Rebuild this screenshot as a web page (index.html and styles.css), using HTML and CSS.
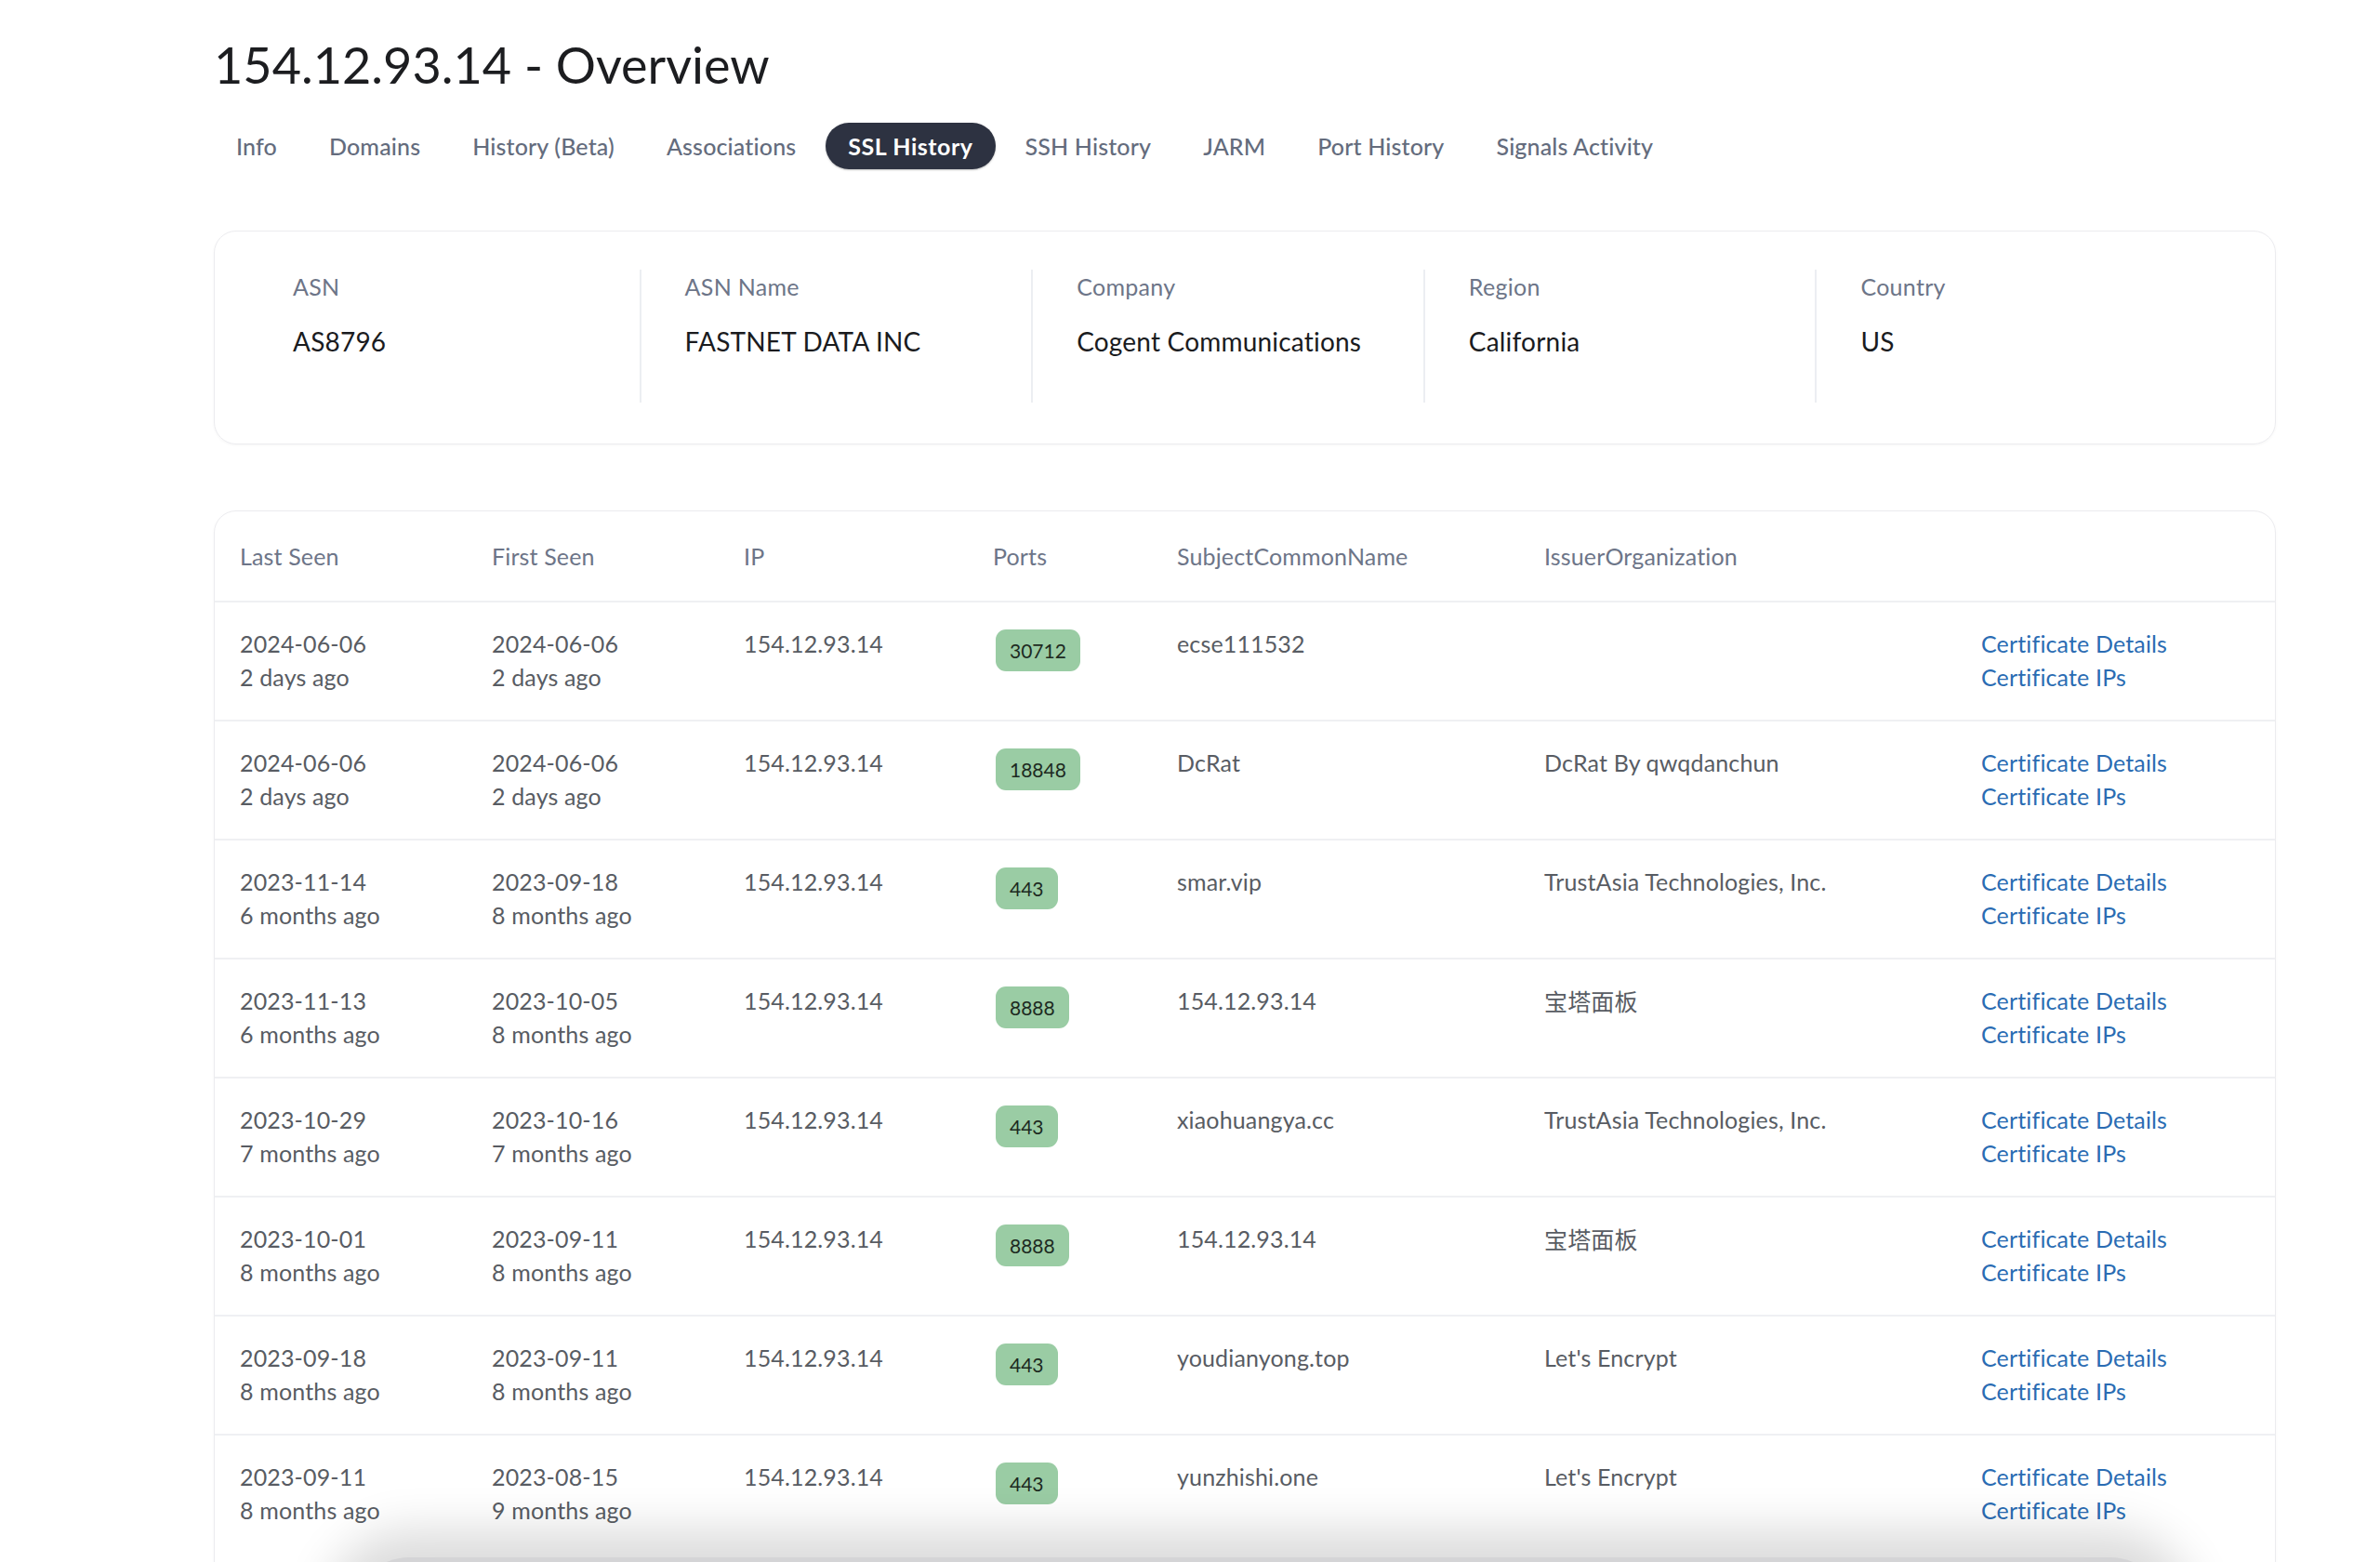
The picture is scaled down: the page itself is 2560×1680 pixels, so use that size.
FILE: index.html
```html
<!DOCTYPE html>
<html lang="en">
<head>
<meta charset="utf-8">
<title>154.12.93.14 - Overview</title>
<link rel="stylesheet" href="styles.css">
</head>
<body>
<main class="page">
  <h1 class="title">154.12.93.14 - Overview</h1>
  <nav class="tabs">
    <a class="tab">Info</a>
    <a class="tab">Domains</a>
    <a class="tab">History (Beta)</a>
    <a class="tab">Associations</a>
    <a class="tab tab-active">SSL History</a>
    <a class="tab">SSH History</a>
    <a class="tab">JARM</a>
    <a class="tab">Port History</a>
    <a class="tab">Signals Activity</a>
  </nav>

  <section class="info-card">
    <div class="info-col">
      <div class="info-label">ASN</div>
      <div class="info-value">AS8796</div>
    </div>
    <div class="info-col">
      <div class="info-label">ASN Name</div>
      <div class="info-value">FASTNET DATA INC</div>
    </div>
    <div class="info-col">
      <div class="info-label">Company</div>
      <div class="info-value">Cogent Communications</div>
    </div>
    <div class="info-col">
      <div class="info-label">Region</div>
      <div class="info-value">California</div>
    </div>
    <div class="info-col">
      <div class="info-label">Country</div>
      <div class="info-value">US</div>
    </div>
  </section>

  <section class="table-card">
    <table class="ssl-table">
      <thead>
        <tr>
          <th class="c-last">Last Seen</th>
          <th class="c-first">First Seen</th>
          <th class="c-ip">IP</th>
          <th class="c-ports">Ports</th>
          <th class="c-subject">SubjectCommonName</th>
          <th class="c-issuer">IssuerOrganization</th>
          <th class="c-links"></th>
        </tr>
      </thead>
      <tbody>
        <tr>
          <td>2024-06-06<br>2 days ago</td>
          <td>2024-06-06<br>2 days ago</td>
          <td>154.12.93.14</td>
          <td><span class="port">30712</span></td>
          <td>ecse111532</td>
          <td></td>
          <td><a class="link">Certificate Details</a><br><a class="link">Certificate IPs</a></td>
        </tr>
        <tr>
          <td>2024-06-06<br>2 days ago</td>
          <td>2024-06-06<br>2 days ago</td>
          <td>154.12.93.14</td>
          <td><span class="port">18848</span></td>
          <td>DcRat</td>
          <td>DcRat By qwqdanchun</td>
          <td><a class="link">Certificate Details</a><br><a class="link">Certificate IPs</a></td>
        </tr>
        <tr>
          <td>2023-11-14<br>6 months ago</td>
          <td>2023-09-18<br>8 months ago</td>
          <td>154.12.93.14</td>
          <td><span class="port">443</span></td>
          <td>smar.vip</td>
          <td>TrustAsia Technologies, Inc.</td>
          <td><a class="link">Certificate Details</a><br><a class="link">Certificate IPs</a></td>
        </tr>
        <tr>
          <td>2023-11-13<br>6 months ago</td>
          <td>2023-10-05<br>8 months ago</td>
          <td>154.12.93.14</td>
          <td><span class="port">8888</span></td>
          <td>154.12.93.14</td>
          <td class="cjk">宝塔面板</td>
          <td><a class="link">Certificate Details</a><br><a class="link">Certificate IPs</a></td>
        </tr>
        <tr>
          <td>2023-10-29<br>7 months ago</td>
          <td>2023-10-16<br>7 months ago</td>
          <td>154.12.93.14</td>
          <td><span class="port">443</span></td>
          <td>xiaohuangya.cc</td>
          <td>TrustAsia Technologies, Inc.</td>
          <td><a class="link">Certificate Details</a><br><a class="link">Certificate IPs</a></td>
        </tr>
        <tr>
          <td>2023-10-01<br>8 months ago</td>
          <td>2023-09-11<br>8 months ago</td>
          <td>154.12.93.14</td>
          <td><span class="port">8888</span></td>
          <td>154.12.93.14</td>
          <td class="cjk">宝塔面板</td>
          <td><a class="link">Certificate Details</a><br><a class="link">Certificate IPs</a></td>
        </tr>
        <tr>
          <td>2023-09-18<br>8 months ago</td>
          <td>2023-09-11<br>8 months ago</td>
          <td>154.12.93.14</td>
          <td><span class="port">443</span></td>
          <td>youdianyong.top</td>
          <td>Let's Encrypt</td>
          <td><a class="link">Certificate Details</a><br><a class="link">Certificate IPs</a></td>
        </tr>
        <tr>
          <td>2023-09-11<br>8 months ago</td>
          <td>2023-08-15<br>9 months ago</td>
          <td>154.12.93.14</td>
          <td><span class="port">443</span></td>
          <td>yunzhishi.one</td>
          <td>Let's Encrypt</td>
          <td><a class="link">Certificate Details</a><br><a class="link">Certificate IPs</a></td>
        </tr>
      </tbody>
    </table>
  </section>
</main>
<div class="floating-shadow"></div>
</body>
</html>
```

FILE: styles.css
```css
html, body {
  margin: 0;
  padding: 0;
  background: #ffffff;
}

body {
  font-family: "Lato", "Noto Sans", "Noto Sans CJK SC", sans-serif;
  color: #1e1f22;
  overflow: hidden;
  height: 1680px;
}

.page {
  width: 2218px;
  padding: 38px 0 0 230px;
}

.title {
  margin: 0;
  font-size: 54px;
  line-height: 1.2;
  font-weight: 400;
  color: #1c1d20;
}

.tabs {
  display: flex;
  align-items: center;
  gap: 8px;
  margin-top: 29px;
}

.tab {
  display: block;
  height: 50px;
  line-height: 50px;
  padding: 0 24px;
  border-radius: 25px;
  font-size: 25px;
  letter-spacing: 0.15px;
  color: #646c7d;
  font-weight: 500;
  white-space: nowrap;
}

.tab-active {
  background: #2d3241;
  color: #ffffff;
  font-weight: 700;
  letter-spacing: 0.55px;
  box-shadow: 0 1px 2px rgba(0, 0, 0, 0.25);
}

.info-card {
  margin-top: 66px;
  display: grid;
  grid-template-columns: repeat(5, 1fr);
  padding: 41px 73px 44px 35px;
  border: 1px solid #ececef;
  border-radius: 24px;
  box-shadow: 0 1px 3px rgba(0, 0, 0, 0.04);
}

.info-col {
  min-height: 143px;
  padding-left: 47px;
  border-left: 2px solid #eceef2;
}

.info-col:first-child {
  border-left-color: transparent;
}

.info-label {
  font-size: 25px;
  line-height: 36px;
  letter-spacing: 0.3px;
  color: #6d7588;
}

.info-value {
  margin-top: 21px;
  font-size: 28px;
  line-height: 40px;
  letter-spacing: 0.2px;
  color: #1a1b1e;
}

.table-card {
  margin-top: 71px;
  padding-bottom: 60px;
  border: 1px solid #ececef;
  border-radius: 24px;
  box-shadow: 0 1px 3px rgba(0, 0, 0, 0.04);
  overflow: hidden;
}

.ssl-table {
  width: 100%;
  border-collapse: collapse;
  table-layout: fixed;
  font-size: 25px;
  line-height: 36px;
  letter-spacing: 0.15px;
}

.ssl-table th {
  text-align: left;
  font-weight: 400;
  color: #6d7588;
  padding: 30px 0 30px 27px;
  border-bottom: 2px solid #eff0f3;
}

.ssl-table td {
  vertical-align: top;
  padding: 26px 0 28px 27px;
  color: #585c63;
  border-bottom: 2px solid #eff0f3;
  white-space: nowrap;
}

.ssl-table tbody tr:last-child td {
  border-bottom-color: transparent;
}

.c-last { width: 244px; }
.c-first { width: 244px; }
.c-ip { width: 241px; }
.c-ports { width: 171px; }
.c-subject { width: 368px; }
.c-issuer { width: 443px; }

.cjk {
  font-family: "Noto Sans CJK SC", "Lato", sans-serif;
}

.port {
  display: inline-block;
  margin: 3px 0 0 3px;
  height: 45px;
  line-height: 45px;
  padding: 0 15px;
  border-radius: 11px;
  background: #9acca4;
  color: #1d2a21;
  font-size: 21px;
  letter-spacing: 0;
  vertical-align: top;
}

.link {
  color: #2a6cb3;
  text-decoration: none;
}

.floating-shadow {
  position: fixed;
  left: 380px;
  right: 230px;
  bottom: -115px;
  height: 120px;
  border-radius: 60px;
  background: #d4d4d6;
  box-shadow: 0 0 50px 30px rgba(0, 0, 0, 0.14);
}
```
